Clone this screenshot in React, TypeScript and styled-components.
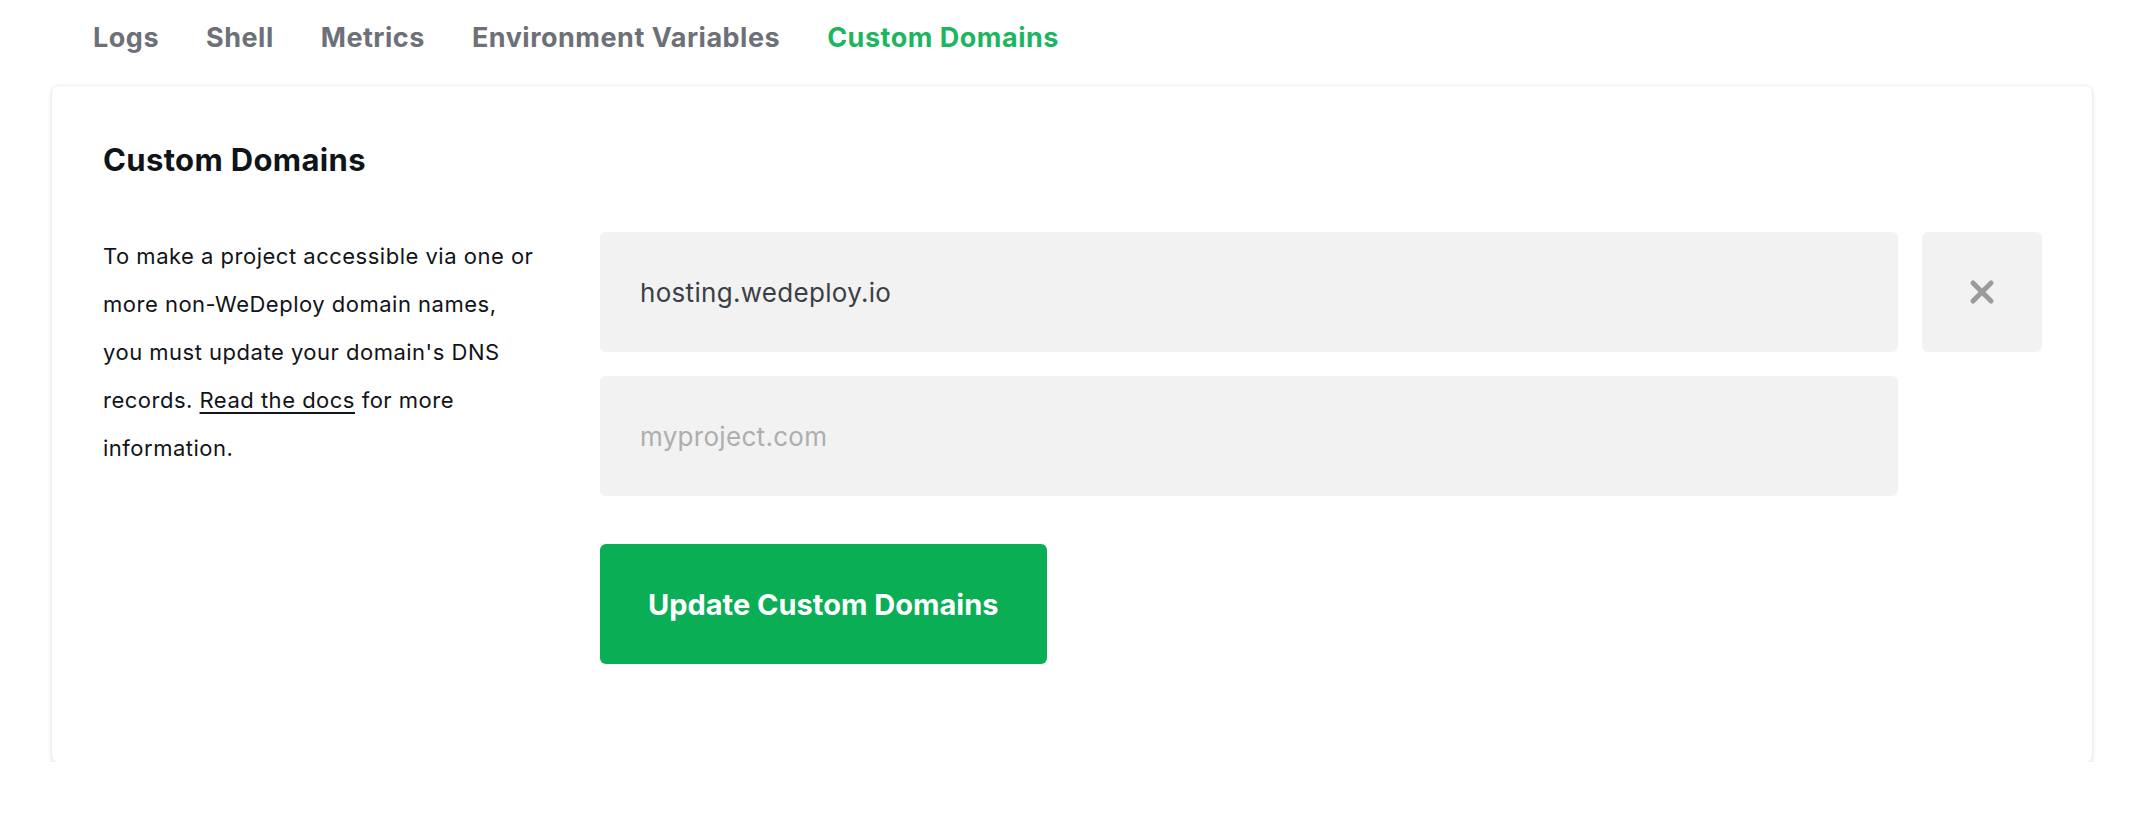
import React, { useState } from 'react'
import styled, { createGlobalStyle } from 'styled-components'

const GlobalStyle = createGlobalStyle`
  html, body {
    margin: 0;
    padding: 0;
    background: #ffffff;
  }
  body {
    font-family: Inter, 'Noto Sans', sans-serif;
    -webkit-font-smoothing: antialiased;
  }
`

const Page = styled.div`
  width: 2150px;
  padding: 0 0 0 52px;
  box-sizing: border-box;
`

const TabBar = styled.nav`
  display: flex;
  align-items: center;
  gap: 47px;
  height: 86px;
  padding: 0 0 12px 41px;
  box-sizing: border-box;
`

const Tab = styled.a<{ $active?: boolean }>`
  font-size: 27px;
  font-weight: 700;
  letter-spacing: 0.5px;
  color: ${({ $active }) => ($active ? '#1db55f' : '#6d7077')};
  text-decoration: none;
  cursor: pointer;
`

const Card = styled.section`
  width: 2040px;
  box-sizing: border-box;
  padding: 50px 50px 98px 51px;
  background: #ffffff;
  border-radius: 6px;
  box-shadow: 0 1px 5px rgba(0, 0, 0, 0.14), 0 0 1px rgba(0, 0, 0, 0.1);
`

const Title = styled.h2`
  margin: 0 0 48px;
  font-size: 31px;
  line-height: 48px;
  font-weight: 700;
  letter-spacing: 0.35px;
  color: #0f1418;
`

const Body = styled.div`
  display: grid;
  grid-template-columns: 446px 1fr;
  column-gap: 51px;
`

const Description = styled.p`
  margin: 0;
  max-width: 436px;
  font-size: 22px;
  line-height: 48px;
  letter-spacing: 0.5px;
  color: #111418;
`

const DocsLink = styled.a`
  color: inherit;
  text-decoration: underline;
  text-underline-offset: 4px;
  text-decoration-thickness: 1.5px;
`

const Fields = styled.div`
  display: grid;
  grid-template-columns: 1fr 120px;
  gap: 24px;
`

const DomainInput = styled.input`
  height: 120px;
  box-sizing: border-box;
  border: none;
  outline: none;
  border-radius: 6px;
  background: #f2f2f2;
  padding: 0 40px;
  font-family: Inter, 'Noto Sans', sans-serif;
  font-size: 26px;
  letter-spacing: 0.3px;
  color: #3b3f45;

  &::placeholder {
    color: #adaeb0;
  }
`

const RemoveButton = styled.button`
  width: 120px;
  height: 120px;
  border: none;
  border-radius: 6px;
  background: #f2f2f2;
  display: flex;
  align-items: center;
  justify-content: center;
  cursor: pointer;
  padding: 0;
`

const Actions = styled.div`
  grid-column: 1 / 2;
  padding-top: 24px;
`

const SubmitButton = styled.button`
  height: 120px;
  padding: 0 48px;
  border: none;
  border-radius: 6px;
  background: #09ae55;
  color: #ffffff;
  font-family: Inter, 'Noto Sans', sans-serif;
  font-size: 29px;
  font-weight: 700;
  cursor: pointer;
`

const tabs = ['Logs', 'Shell', 'Metrics', 'Environment Variables', 'Custom Domains']

const CloseIcon = () => (
  <svg width="26" height="26" viewBox="0 0 26 26" fill="none">
    <path d="M4 4 L22 22 M22 4 L4 22" stroke="#9b9b9b" strokeWidth="5" strokeLinecap="round" />
  </svg>
)

const App = () => {
  const [domains, setDomains] = useState(['hosting.wedeploy.io'])
  const [draft, setDraft] = useState('')

  return (
    <>
      <GlobalStyle />
      <Page>
        <TabBar>
          {tabs.map((tab) => (
            <Tab key={tab} $active={tab === 'Custom Domains'}>
              {tab}
            </Tab>
          ))}
        </TabBar>
        <Card>
          <Title>Custom Domains</Title>
          <Body>
            <Description>
              To make a project accessible via one or more non-WeDeploy domain names, you must update your
              domain's DNS records. <DocsLink href="#">Read the docs</DocsLink> for more information.
            </Description>
            <Fields>
              {domains.map((domain, i) => (
                <React.Fragment key={i}>
                  <DomainInput
                    value={domain}
                    onChange={(e) => setDomains(domains.map((d, j) => (j === i ? e.target.value : d)))}
                  />
                  <RemoveButton onClick={() => setDomains(domains.filter((_, j) => j !== i))}>
                    <CloseIcon />
                  </RemoveButton>
                </React.Fragment>
              ))}
              <DomainInput placeholder="myproject.com" value={draft} onChange={(e) => setDraft(e.target.value)} />
              <div />
              <Actions>
                <SubmitButton>Update Custom Domains</SubmitButton>
              </Actions>
            </Fields>
          </Body>
        </Card>
      </Page>
    </>
  )
}

export default App
